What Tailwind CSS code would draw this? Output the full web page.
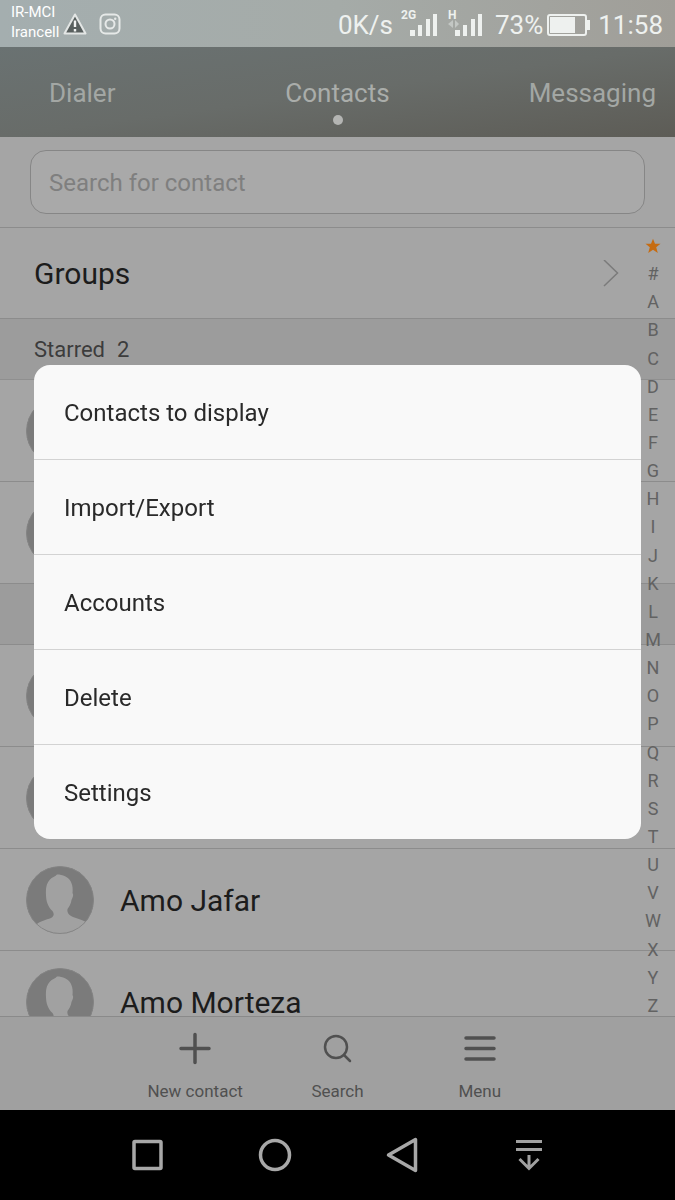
<!DOCTYPE html>
<html lang="en">
<head>
  <meta charset="UTF-8" />
  <meta name="viewport" content="width=device-width, initial-scale=1.0"/>
  <title>Contacts</title>
  <script src="https://cdn.jsdelivr.net/npm/@tailwindcss/browser@4"></script>
</head>
<body class="bg-black font-['Roboto',sans-serif] text-[#1c1c1c]">

  <div class="h-screen flex flex-col bg-[#a5a5a5] overflow-hidden">

    <!-- status bar -->
    <div class="h-[47px] shrink-0 flex items-center justify-between pl-[11px] pr-3 bg-linear-to-r from-[#a4aeaf] via-[#a5aba8] to-[#a09e98] text-[#eef1ef]">
      <div class="flex items-center">
        <div class="text-[15px] leading-5 text-white pb-1">
          <div>IR-MCI</div>
          <div>Irancell</div>
        </div>
        <svg class="ml-1 w-6 h-6" viewBox="0 0 24 24">
          <path d="M12 2.5 22.5 21.5H1.5Z" fill="#59605f" stroke="#e3e6e5" stroke-width="2" stroke-linejoin="round"/>
          <path d="M12 8.500v6.500M12 17v2.500" stroke="#f2f4f3" stroke-width="2.400"/>
        </svg>
        <svg class="ml-3 w-[22px] h-[22px]" viewBox="0 0 22 22" fill="none" stroke="#e6e9e8" stroke-width="2">
          <rect x="1.500" y="1.500" width="19" height="19" rx="5"/>
          <circle cx="11" cy="11" r="4.500"/>
          <circle cx="16.200" cy="5.800" r="1.200" fill="#e6e9e8" stroke="none"/>
        </svg>
      </div>
      <div class="flex items-center pt-0.5 text-[26px] leading-8">
        <span>0K/s</span>
        <svg class="ml-2 w-10 h-8" viewBox="0 0 40 32" fill="#eef1ef">
          <text x="0" y="10" font-size="12" font-weight="700">2G</text>
          <rect x="9" y="21" width="5" height="6"/>
          <rect x="17" y="16" width="4" height="11"/>
          <rect x="25" y="10" width="4" height="17"/>
          <rect x="32" y="5" width="4" height="22"/>
        </svg>
        <svg class="ml-1.5 w-10 h-8" viewBox="0 0 40 32" fill="#eef1ef">
          <text x="1" y="10" font-size="12" font-weight="700">H</text>
          <path d="M1 15l5-4v8zM12 15l-4-4v8z" fill="#c3c7c4"/>
          <rect x="8" y="21" width="5" height="6"/>
          <rect x="16" y="16" width="4" height="11"/>
          <rect x="24" y="10" width="4" height="17"/>
          <rect x="31" y="5" width="4" height="22"/>
        </svg>
        <span class="ml-2">73%</span>
        <svg class="ml-1 w-[43px] h-[22px]" viewBox="0 0 43 22">
          <rect x="1" y="1" width="38" height="20" rx="2" fill="none" stroke="#eef1ef" stroke-width="2"/>
          <rect x="3" y="3" width="25" height="16" fill="#eef1ef"/>
          <rect x="40" y="6" width="3" height="10" fill="#eef1ef"/>
        </svg>
        <span class="ml-2">11:58</span>
      </div>
    </div>

    <!-- tabs -->
    <nav class="h-[90px] shrink-0 grid grid-cols-3 items-center pt-0.5 bg-linear-to-br from-[#6a7272] via-[#686c69] to-[#5d5c56] text-[26px] leading-8 text-[#a3a7a4]">
      <a href="#" class="pl-[49px]">Dialer</a>
      <a href="#" class="relative text-center text-[#aaadaa]">
        Contacts
        <span class="absolute top-full mt-1.5 left-1/2 -ml-[5px] size-[10px] rounded-full bg-[#b4b5b3]"></span>
      </a>
      <a href="#" class="pr-[19px] text-right">Messaging</a>
    </nav>

    <div class="h-[91px] shrink-0 px-[30px] pt-[13px] border-b border-[#8c8c8c]">
      <input type="search" aria-label="Search for contact" placeholder="Search for contact" class="w-full h-16 rounded-2xl border border-[#868686] bg-[#a9a9a9] px-[18px] pt-0.5 text-2xl placeholder:text-[#7f7f7f]" />
    </div>

    <main class="flex-1 min-h-0 relative">
      <div class="h-full overflow-hidden">
        <a href="#" class="h-[91px] flex items-center justify-between pt-0.5 pl-[34px] pr-14 border-b border-[#8c8c8c]">
          <span class="text-[30px] leading-9">Groups</span>
          <svg class="w-4 h-7" viewBox="0 0 16 28" fill="none" stroke="#7b7b7b" stroke-width="1.500"><path d="M1 0 14.500 13 1 26"/></svg>
        </a>
        <h2 class="h-[61px] flex items-center gap-3 pl-[34px] bg-[#9c9c9c] border-b border-[#8f8f8f] text-[22px] text-[#3c3c3c]"><span>Starred</span><span>2</span></h2>
        <ul id="starred"></ul>
        <div class="h-[61px] bg-[#9c9c9c] border-b border-[#8c8c8c]"></div>
        <ul id="contacts"></ul>
      </div>
      <div id="index" class="absolute top-1 -bottom-1 right-1 w-9 flex flex-col text-lg leading-5 text-[#626262]">
        <a href="#" aria-label="Starred" class="flex-1 flex items-center justify-center">
          <svg class="w-4 h-4" viewBox="0 0 16 16" fill="#c66c12"><path d="M8 .8l2 5h5.500l-4.300 3.500 1.600 5.700L8 11.800 3.200 15l1.600-5.700L.5 5.800H6z"/></svg>
        </a>
      </div>
    </main>

    <!-- bottom toolbar -->
    <div class="h-[94px] shrink-0 grid grid-cols-3 px-[124px] pt-3 bg-[#a0a0a0] border-t border-[#8a8a8a] text-[17px] leading-5 text-[#505050]">
      <button class="flex flex-col items-center gap-3">
        <svg class="w-10 h-10" viewBox="0 0 40 40" fill="none" stroke="#505050" stroke-width="3.500" stroke-linecap="round"><path d="M20 5.500v28M6 19.500h28"/></svg>
        New contact
      </button>
      <button class="flex flex-col items-center gap-3">
        <svg class="w-10 h-10" viewBox="0 0 40 40" fill="none" stroke="#505050" stroke-width="2.500" stroke-linecap="round"><circle cx="19" cy="18" r="11"/><path d="M27 26l6 6"/></svg>
        Search
      </button>
      <button class="flex flex-col items-center gap-3">
        <svg class="w-10 h-10" viewBox="0 0 40 40" fill="none" stroke="#505050" stroke-width="3.500" stroke-linecap="round"><path d="M6 9h28M6 19.500h28M6 30h28"/></svg>
        Menu
      </button>
    </div>

    <!-- system navigation -->
    <div class="h-[90px] shrink-0 grid grid-cols-4 items-center justify-items-center pl-[84px] pr-[82px] bg-black">
      <button aria-label="Recent apps">
        <svg class="w-10 h-10" viewBox="0 0 40 40" fill="none" stroke="#a8a8a8" stroke-width="3.500"><rect x="6" y="6.500" width="27" height="27" rx="1"/></svg>
      </button>
      <button aria-label="Home">
        <svg class="w-10 h-10" viewBox="0 0 40 40" fill="none" stroke="#a8a8a8" stroke-width="3.500"><circle cx="20" cy="20" r="14.500"/></svg>
      </button>
      <button aria-label="Back">
        <svg class="w-10 h-10" viewBox="0 0 40 40" fill="none" stroke="#a8a8a8" stroke-width="3.500" stroke-linejoin="round"><path d="M33.500 4.500v31L6.500 20z"/></svg>
      </button>
      <button aria-label="Hide navigation bar">
        <svg class="w-10 h-10" viewBox="0 0 40 40" fill="none" stroke="#a0a0a0" stroke-width="3"><path d="M7 6.500h26M7 14.500h26M20 20v13M10.500 24 20 33.500 29.500 24"/></svg>
      </button>
    </div>
  </div>

  <!-- options menu -->
  <div class="fixed inset-0 flex items-center px-[34px] pt-1">
    <div role="menu" class="w-full rounded-2xl bg-[#f9f9f9] overflow-hidden flex flex-col text-2xl text-[#2a2a2a]">
      <button role="menuitem" class="h-[95px] px-[30px] pt-0.5 text-left border-b border-[#d3d3d3]">Contacts to display</button>
      <button role="menuitem" class="h-[95px] px-[30px] pt-0.5 text-left border-b border-[#d3d3d3]">Import/Export</button>
      <button role="menuitem" class="h-[95px] px-[30px] pt-0.5 text-left border-b border-[#d3d3d3]">Accounts</button>
      <button role="menuitem" class="h-[95px] px-[30px] pt-0.5 text-left border-b border-[#d3d3d3]">Delete</button>
      <button role="menuitem" class="h-[94px] px-[30px] pt-0.5 text-left">Settings</button>
    </div>
  </div>

  <script>
    const avatar = `
      <svg class="w-[68px] h-[68px] rounded-full" viewBox="0 0 68 68">
        <circle cx="34" cy="34" r="34" fill="#7b7b7b"/>
        <path d="M31 8.500C37 8.500 42 11 44.500 15C46.500 19 47 22 46.500 27C48 29 46.500 32 45.500 34C45 38 43 41 41.500 43C41 46 42 49 47 51C52 53 57 54 60 56A34 34 0 0 1 10.500 58.500C14 55 20 54 25 52C28 50.500 28.500 48 26.500 45C22 41 20 35 20 29C19.500 22 20.500 17 24 13.500C26 11 29 11 31 8.500z" fill="#a1a1a1"/>
        <circle cx="34" cy="34" r="33.500" fill="none" stroke="#858585"/>
      </svg>`;

    function addContacts(id, names) {
      document.getElementById(id).innerHTML = names.map(name => `
        <li class="h-[102px] flex items-center gap-[26px] pl-[26px] border-b border-[#8c8c8c] text-[30px] leading-9">
          ${avatar}<span class="pt-0.5">${name}</span>
        </li>`).join('');
    }

    // the open menu covers the unnamed rows
    addContacts('starred', ['', '']);
    addContacts('contacts', ['', '', 'Amo Jafar', 'Amo Morteza']);

    const index = document.getElementById('index');
    for (const letter of '#ABCDEFGHIJKLMNOPQRSTUVWXYZ') {
      const link = document.createElement('a');
      link.href = '#';
      link.className = 'flex-1 flex items-center justify-center';
      link.textContent = letter;
      index.appendChild(link);
    }
  </script>

</body>
</html>
